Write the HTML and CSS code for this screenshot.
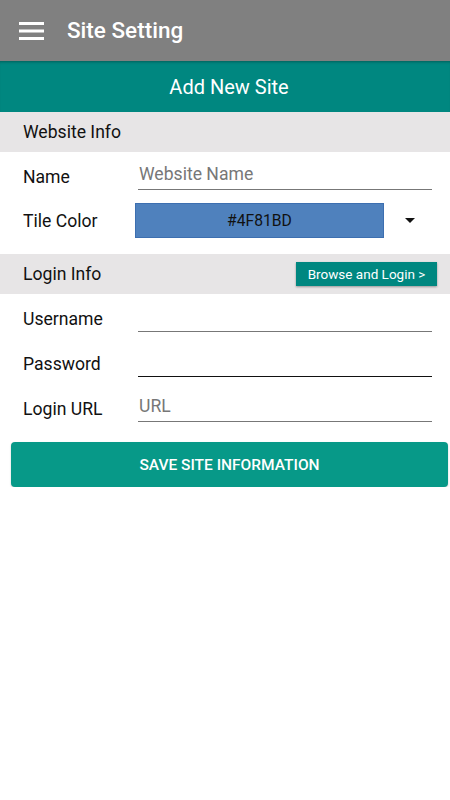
FILE: index.html
```html
<!DOCTYPE html>
<html lang="en">
  <head>
    <meta charset="UTF-8" />
    <meta name="viewport" content="width=device-width, initial-scale=1.0" />
    <title>Site Setting</title>
    <link rel="stylesheet" href="styles.css">
  </head>
  <body>
    <header class="toolbar">
      <svg class="menuIcon" width="25" height="18" viewBox="0 0 25 18">
        <rect x="0" y="0" width="25" height="3" fill="#fff" />
        <rect x="0" y="7.5" width="25" height="3" fill="#fff" />
        <rect x="0" y="15" width="25" height="3" fill="#fff" />
      </svg>
      <h1 class="toolbar__title">Site Setting</h1>
    </header>

    <div class="banner">Add New Site</div>

    <!-- Информация о сайте -->
    <div class="section">Website Info</div>
    <div class="form">
      <div class="row">
        <label class="row__label">Name</label>
        <div class="field"><span class="hint">Website Name</span></div>
      </div>
      <div class="row row--color">
        <label class="row__label">Tile Color</label>
        <div class="colorBox">#4F81BD</div>
        <div class="arrow"></div>
      </div>
    </div>

    <!-- Данные для входа -->
    <div class="section section--login">
      <span>Login Info</span>
      <button class="browseBtn" type="button">Browse and Login &gt;</button>
    </div>
    <div class="form form--login">
      <div class="row">
        <label class="row__label">Username</label>
        <div class="field"></div>
      </div>
      <div class="row">
        <label class="row__label">Password</label>
        <div class="field field--active"></div>
      </div>
      <div class="row">
        <label class="row__label">Login URL</label>
        <div class="field"><span class="hint">URL</span></div>
      </div>
    </div>

    <div class="saveWrap">
      <button class="saveBtn" type="button">SAVE SITE INFORMATION</button>
    </div>
  </body>
</html>
```

FILE: styles.css
```css
:root {
  --main-font: Roboto, "Noto Sans", sans-serif;
  --teal: #008780;
  --save-color: #079988;
  --section-bg: #e7e5e6;
}
* {
  margin: 0;
  padding: 0;
  box-sizing: border-box;
  font-family: var(--main-font);
}
body {
  width: 450px;
  background: white;
  color: #111;
}

.toolbar {
  height: 61px;
  background: #808080;
  display: flex;
  align-items: center;
  padding-left: 19px;
}
.menuIcon {
  display: block;
}
.toolbar__title {
  color: white;
  font-size: 22.5px;
  font-weight: 500;
  margin-left: 23px;
  margin-top: -1px;
}

.banner {
  height: 51px;
  background: var(--teal);
  color: white;
  font-size: 20px;
  display: flex;
  align-items: center;
  justify-content: center;
  padding-left: 8px;
  box-shadow: inset 0 3px 3px -2px rgba(0, 0, 0, 0.3);
}

.section {
  height: 40px;
  background: var(--section-bg);
  font-size: 17.6px;
  display: flex;
  align-items: center;
  padding-left: 23px;
}
.section--login {
  justify-content: space-between;
  padding-right: 13px;
}

.browseBtn {
  background: var(--teal);
  color: white;
  border: none;
  font-size: 13.5px;
  width: 141px;
  height: 24px;
  box-shadow: 0 1px 2px rgba(0, 0, 0, 0.35);
}

.form {
  padding: 2px 18px 0 23px;
}
.row {
  display: flex;
  align-items: center;
  height: 45px;
}
.row__label {
  font-size: 17.6px;
  width: 115px;
  flex-shrink: 0;
}
.field {
  flex: 1;
  height: 32px;
  border-bottom: 1.5px solid #777;
  display: flex;
  align-items: center;
  padding-left: 1px;
  margin-top: -5px;
}
.field--active {
  border-bottom-color: #111;
}
.hint {
  color: #777;
  font-size: 17.6px;
  margin-top: 0;
}

.row--color {
  height: 43px;
  margin-bottom: 12px;
}
.colorBox {
  width: 249px;
  height: 35px;
  margin-left: -3px;
  background: #4f81bd;
  border: 1px solid #3d6fb0;
  display: flex;
  align-items: center;
  justify-content: center;
  font-size: 15.7px;
  color: #111;
}
.arrow {
  width: 0;
  height: 0;
  margin-left: 21px;
  border-left: 5.5px solid transparent;
  border-right: 5.5px solid transparent;
  border-top: 5px solid #111;
}

.saveWrap {
  padding: 11px 2px 0 11px;
}
.saveBtn {
  width: 100%;
  height: 45px;
  background: var(--save-color);
  color: white;
  border: none;
  border-radius: 4px;
  font-size: 15.5px;
  font-weight: 500;
  box-shadow: 0 1px 2px rgba(0, 0, 0, 0.2);
}
```
